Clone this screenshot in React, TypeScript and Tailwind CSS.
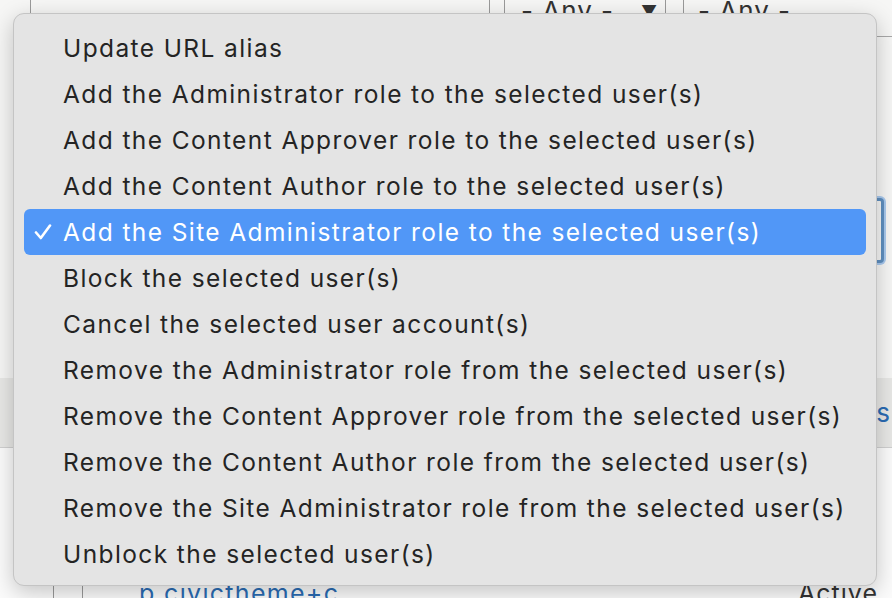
import React from "react";

const items = [
  "Update URL alias",
  "Add the Administrator role to the selected user(s)",
  "Add the Content Approver role to the selected user(s)",
  "Add the Content Author role to the selected user(s)",
  "Add the Site Administrator role to the selected user(s)",
  "Block the selected user(s)",
  "Cancel the selected user account(s)",
  "Remove the Administrator role from the selected user(s)",
  "Remove the Content Approver role from the selected user(s)",
  "Remove the Content Author role from the selected user(s)",
  "Remove the Site Administrator role from the selected user(s)",
  "Unblock the selected user(s)",
];

const font = { fontFamily: "Inter, 'Open Sans', 'Noto Sans', sans-serif" };

export default function App() {
  return (
    <div
      className="relative w-[892px] h-[598px] overflow-hidden bg-[#f6f6f5] text-[#222]"
      style={font}
    >
      {/* background page */}
      <div className="flex flex-col h-full">
        <div className="h-[37px] flex border-b border-[#a8a8a8] ml-[30px] border-l border-l-[#9a9a9a]">
          <div className="w-[459px] border-r border-[#9a9a9a]" />
          <div className="w-[14px]" />
          <div className="w-[162px] border-l border-r border-[#9a9a9a] flex items-start pl-[16px] relative">
            <span className="text-[26px] leading-[26px] -mt-[2px] tracking-[1px] text-[#333]">- Any -</span>
            <span className="absolute left-[136px] top-[3px] text-[16px] leading-[16px] text-[#333]">▼</span>
          </div>
          <div className="w-[17px]" />
          <div className="flex-1 border-l border-[#9a9a9a] pl-[14px]">
            <span className="text-[26px] leading-[26px] -mt-[2px] tracking-[1px] block text-[#333]">- Any -</span>
          </div>
        </div>
        <div className="h-[161px]" />
        <div className="h-[65px] flex justify-end pr-[8px]">
          <div className="w-[200px] h-full rounded-[4px] border-[3px] border-[#5f8fc0] ring-2 ring-[#a9c9ee] bg-[#f6f6f5]" />
        </div>
        <div className="h-[115px]" />
        <div className="h-[70px] bg-[#e8e8e6] border-b border-[#d0d0d0] flex justify-end items-center pr-[2px]">
          <span className="text-[26px] text-[#2a6bb3]">Us</span>
        </div>
        <div className="flex-1 bg-[#fbfbfb] flex">
          <div className="w-[53px]" />
          <div className="w-[30px] border-l border-r border-[#9a9a9a]" />
          <div className="flex-1 flex items-end justify-between pl-[56px] pr-[14px]">
            <span className="text-[25px] leading-[25px] tracking-[1.3px] text-[#2a6bb3] translate-y-[8px]">p.civictheme+c...</span>
            <span className="text-[25px] leading-[25px] tracking-[1px] text-[#333] translate-y-[8px]">Active</span>
          </div>
        </div>
      </div>

      {/* dropdown menu overlay */}
      <div className="absolute left-[13px] top-[13px] w-[864px] h-[573px] rounded-[11px] bg-[#e4e4e4] border border-[#c4c4c4] shadow-[0_6px_22px_rgba(0,0,0,0.22)] pt-[11px] px-[10px]">
        {items.map((t, i) => {
          const sel = i === 4;
          return (
            <div
              key={t}
              className={
                "h-[46px] flex items-center rounded-[6px] pl-[39px] text-[24.5px] tracking-[1.4px] " +
                (sel ? "bg-[#5197f7] text-white" : "text-[#242424]")
              }
            >
              {sel && (
                <svg
                  className="absolute left-[20px]"
                  width="18"
                  height="16"
                  viewBox="0 0 18 16"
                  fill="none"
                >
                  <path
                    d="M2 8.5 L6.8 14 L16 1.5"
                    stroke="white"
                    strokeWidth="2.6"
                    strokeLinecap="round"
                    strokeLinejoin="round"
                  />
                </svg>
              )}
              {t}
            </div>
          );
        })}
      </div>
    </div>
  );
}
